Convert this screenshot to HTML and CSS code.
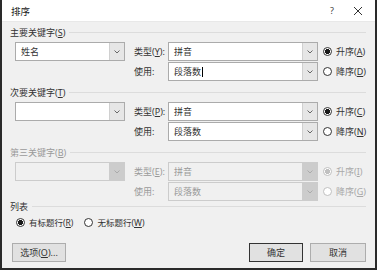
FILE: index.html
```html
<!DOCTYPE html>
<html lang="zh-CN">
<head>
<meta charset="utf-8">
<link rel="stylesheet" href="styles.css">
</head>
<body>
<div class="dialog">
  <div class="titlebar">
    <span class="title">排序</span>
    <span class="tb-help">?</span>
    <span class="tb-close"><svg width="10" height="10" viewBox="0 0 10 10"><path d="M1 1L9 9M9 1L1 9" stroke="#333" stroke-width="1" fill="none"/></svg></span>
  </div>
  <div class="content">
    <div class="group">
      <div class="heading"><span>主要关键字(<u>S</u>)</span></div>
      <div class="keyrow">
        <div class="combo key"><span class="val">姓名</span><span class="drop"><svg width="6" height="4" viewBox="0 0 6 4"><path d="M0.5 0.5L3 3L5.5 0.5" stroke="#666" fill="none"/></svg></span></div>
        <span class="lbl">类型(<u>Y</u>):</span>
        <div class="combo wide"><span class="val">拼音</span><span class="drop"><svg width="6" height="4" viewBox="0 0 6 4"><path d="M0.5 0.5L3 3L5.5 0.5" stroke="#666" fill="none"/></svg></span></div>
        <span class="radio on"><span>升序(<u>A</u>)</span></span>
        <span class="blank"></span>
        <span class="lbl">使用:</span>
        <div class="combo wide"><span class="val">段落数<span class="caret"></span></span><span class="drop"><svg width="6" height="4" viewBox="0 0 6 4"><path d="M0.5 0.5L3 3L5.5 0.5" stroke="#666" fill="none"/></svg></span></div>
        <span class="radio"><span>降序(<u>D</u>)</span></span>
      </div>
    </div>
    <div class="group">
      <div class="heading"><span>次要关键字(<u>T</u>)</span></div>
      <div class="keyrow">
        <div class="combo key"><span class="val"></span><span class="drop"><svg width="6" height="4" viewBox="0 0 6 4"><path d="M0.5 0.5L3 3L5.5 0.5" stroke="#666" fill="none"/></svg></span></div>
        <span class="lbl">类型(<u>P</u>):</span>
        <div class="combo wide"><span class="val">拼音</span><span class="drop"><svg width="6" height="4" viewBox="0 0 6 4"><path d="M0.5 0.5L3 3L5.5 0.5" stroke="#666" fill="none"/></svg></span></div>
        <span class="radio on"><span>升序(<u>C</u>)</span></span>
        <span class="blank"></span>
        <span class="lbl">使用:</span>
        <div class="combo wide"><span class="val">段落数</span><span class="drop"><svg width="6" height="4" viewBox="0 0 6 4"><path d="M0.5 0.5L3 3L5.5 0.5" stroke="#666" fill="none"/></svg></span></div>
        <span class="radio"><span>降序(<u>N</u>)</span></span>
      </div>
    </div>
    <div class="group disabled">
      <div class="heading"><span>第三关键字(<u>B</u>)</span></div>
      <div class="keyrow">
        <div class="combo key"><span class="val"></span><span class="drop"><svg width="6" height="4" viewBox="0 0 6 4"><path d="M0.5 0.5L3 3L5.5 0.5" stroke="#aaa" fill="none"/></svg></span></div>
        <span class="lbl">类型(<u>E</u>):</span>
        <div class="combo wide"><span class="val">拼音</span><span class="drop"><svg width="6" height="4" viewBox="0 0 6 4"><path d="M0.5 0.5L3 3L5.5 0.5" stroke="#aaa" fill="none"/></svg></span></div>
        <span class="radio on"><span>升序(<u>I</u>)</span></span>
        <span class="blank"></span>
        <span class="lbl">使用:</span>
        <div class="combo wide"><span class="val">段落数</span><span class="drop"><svg width="6" height="4" viewBox="0 0 6 4"><path d="M0.5 0.5L3 3L5.5 0.5" stroke="#aaa" fill="none"/></svg></span></div>
        <span class="radio"><span>降序(<u>G</u>)</span></span>
      </div>
    </div>
    <div class="list">
      <div class="heading"><span>列表</span></div>
      <div class="listrow">
        <span class="radio on"><span>有标题行(<u>R</u>)</span></span>
        <span class="radio"><span>无标题行(<u>W</u>)</span></span>
      </div>
    </div>
    <div class="buttons">
      <button class="btn">选项(<u>O</u>)...</button>
      <span class="spacer"></span>
      <button class="btn default">确定</button>
      <button class="btn cancel">取消</button>
    </div>
  </div>
</div>
</body>
</html>
```
FILE: styles.css
```css
* { box-sizing: border-box; }
html, body { margin: 0; padding: 0; background: #fff; }
body {
  font-family: "Noto Sans", "Noto Sans CJK SC", sans-serif;
  font-size: 9px;
  color: #333;
  text-autospace: no-autospace;
}
u { text-decoration: underline; text-underline-offset: 1px; }
.dialog {
  width: 377px;
  height: 270px;
  border: 2px solid #2a2a2a;
  border-top: none;
  background: #f0f0f0;
  display: flex;
  flex-direction: column;
}
.titlebar {
  height: 22px;
  background: #fff;
  display: flex;
  align-items: center;
  padding-left: 9px;
  border-bottom: 1px solid #e8e8e8;
}
.title { font-size: 9.5px; flex: 1; color: #222; }
.tb-help { width: 26px; text-align: center; color: #444; font-size: 9px; }
.tb-close { width: 26px; display: flex; justify-content: center; margin-right: 4px; }
.content { padding: 0 9px 0 8px; display: flex; flex-direction: column; flex: 1; }
.heading {
  height: 20px;
  display: flex;
  align-items: center;
  gap: 4px;
}
.heading::after {
  content: "";
  flex: 1;
  height: 1px;
  background: #dcdcdc;
}
.keyrow {
  display: grid;
  grid-template-columns: 110px 43px 150px auto;
  grid-template-rows: 19px 19px;
  row-gap: 1px;
  align-items: center;
  padding-left: 5px;
  height: 40px;
}
.keyrow .lbl { padding-left: 9px; }
.combo {
  height: 19px;
  border: 1px solid #ababab;
  background: #fff;
  display: flex;
  align-items: stretch;
}
.combo .val { flex: 1; padding-left: 5px; display: flex; align-items: center; }
.combo .drop {
  width: 15px;
  border-left: 1px solid #d0d0d0;
  background: #e6e6e6;
  display: flex;
  align-items: center;
  justify-content: center;
}
.caret { display: inline-block; width: 1px; height: 10px; background: #000; margin-left: 1px; }
.radio {
  display: flex;
  align-items: center;
  gap: 4px;
  padding-left: 5px;
  white-space: nowrap;
}
.radio::before {
  content: "";
  width: 9px;
  height: 9px;
  border: 1px solid #333;
  border-radius: 50%;
  background: #fff;
  box-sizing: border-box;
}
.radio.on::before {
  background: radial-gradient(circle, #1a1a1a 0 2.3px, #fff 2.8px);
}
.disabled { color: #9a9a9a; }
.disabled .combo { background: #f0f0f0; border-color: #cccccc; }
.disabled .combo .drop { background: #cccccc; border-left-color: #cccccc; }
.disabled .radio { color: #a8a8a8; }
.disabled .radio::before { border-color: #c0c0c0; background: #fff; }
.disabled .radio.on::before { background: radial-gradient(circle, #c0c0c0 0 2.3px, #fff 2.8px); }
.list .heading { height: 8px; }
.listrow {
  display: flex;
  gap: 6px;
  height: 20px;
  align-items: center;
  padding-left: 1px;
  margin-top: 2px;
  font-size: 8.5px;
}
.listrow .radio { gap: 4px; }
.buttons {
  display: flex;
  align-items: center;
  margin-top: 11px;
  padding-left: 2px;
  gap: 7px;
}
.spacer { flex: 1; }
.btn {
  font: inherit;
  color: #333;
  height: 19px;
  width: 54px;
  background: #e1e1e1;
  border: 1px solid #adadad;
  padding: 0;
}
.btn.default { border-color: #333; }
.btn.cancel { width: 56px; }
```
